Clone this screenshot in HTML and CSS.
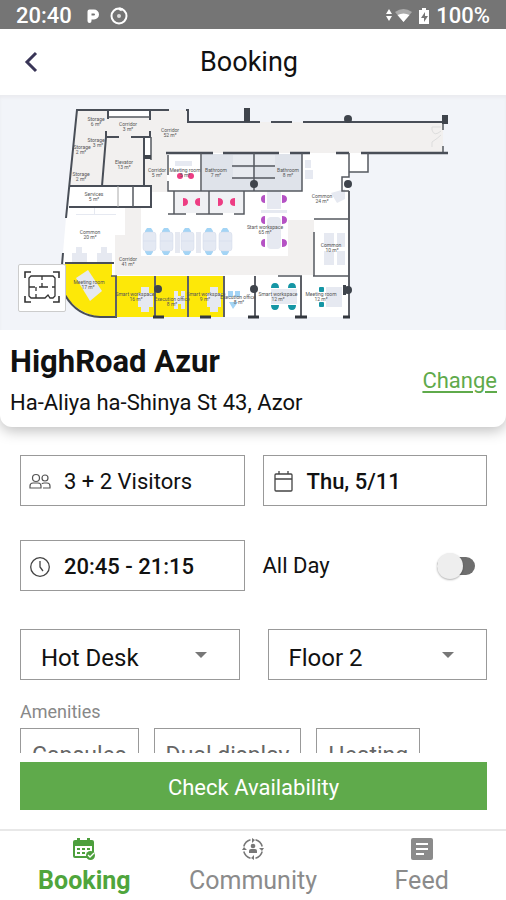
FILE: index.html
```html
<!DOCTYPE html>
<html lang="en">
<head>
  <meta charset="UTF-8">
  <meta name="viewport" content="width=device-width, initial-scale=1">
  <title>Booking</title>
  <link rel="stylesheet" href="styles.css">
</head>
<body>
  <div class="status-bar">
    <span>20:40</span>
    <svg class="status-p" width="14" height="16" viewBox="0 0 14 16"><path d="M3.500 13V3.500H8a3 3 0 0 1 0 6H4" fill="none" stroke="#fff" stroke-width="4" stroke-linejoin="round" stroke-linecap="round"/></svg>
    <svg width="18" height="18" viewBox="0 0 18 18"><circle cx="9" cy="9" r="7.500" fill="none" stroke="#fff" stroke-width="2"/><circle cx="9" cy="9" r="2" fill="#ddd"/><path d="M9 1.500l3 1.500" stroke="#fff" stroke-width="3"/></svg>
    <span class="status-right">
      <svg width="26" height="18" viewBox="0 0 26 18"><path d="M3 2l3 5H0zM3 14l3-5H0z" fill="#fff"/><path d="M9 5q8.500-6 17 0l-8.500 10z" fill="#aaa"/><path d="M11.500 8q6-3 12 0l-6 7z" fill="#fff"/></svg>
      <svg width="12" height="18" viewBox="0 0 12 18"><path d="M4 1h4v2h3v14H1V3h3z" fill="#fff"/><path d="M7 5l-4 6h3v4l4-6H7z" fill="#777"/></svg>
      <span>100%</span>
    </span>
  </div>

  <header class="header">
    <button class="back" aria-label="Back">
      <svg width="16" height="22" viewBox="0 0 16 22"><path d="M12 2L3 11l9 9" fill="none" stroke="#393557" stroke-width="3"/></svg>
    </button>
    <h1>Booking</h1>
  </header>

  <section class="map">
    <svg class="plan" viewBox="0 0 506 235" role="img" aria-label="Floor plan">
      <!-- floor -->
      <path d="M77 15H188V27H443V58H349V222H100Q76 218 65 199L62 169 66 123z" fill="#fff"/>
      <path d="M77 15H188V27H443V58H167V97H151V91H70zM115 140H125V112H141V161H288V125H314V180H115z" fill="#f2f0ef"/>
      <path d="M349 58H368V77H349zM109 16H150V22H109zM71 92H150V111H70zM145 42H151V62H145z" fill="#fff"/>
      <path d="M202 59H302V96H202z" fill="#dfe3ea"/>
      <path d="M233 60H253V70H233zM255 60H275V70H255zM233 73H253V82H233z" fill="#e8ebf0"/>
      <path d="M175 97H208V118H175zM210 97H243V118H210z" fill="#f0f1f4"/>
      <!-- bookable rooms -->
      <path d="M65 168H112V181H224V222H100Q76 218 65 199z" fill="#fde808"/>

      <g fill="#e6e9f1">
        <path d="M76 183L88 175 102 196 90 206z"/>
        <path d="M141 192h8v6h4v14h-4v5h-8v-5h-3v-14h3zM210 192h8v6h3v14h-3v5h-8v-5h-3v-14h3zM174 196h4v5h3v-5h4v18h-4v-5h-3v5h-4z"/>
        <path d="M72 158h4v-6h6v6h5v9H72zM97 158h4v-6h6v6h5v9H97z"/>
        <rect x="175" y="137" width="5" height="21"/><rect x="196" y="137" width="5" height="21"/>
        <rect x="267" y="96" width="14" height="18"/><rect x="267" y="122" width="14" height="32" rx="4"/>
        <path d="M261 115h26v3h-26zM324 138h10v14h-10zM337 138h8v14h-8zM324 156h10v14h-10zM337 156h8v14h-8zM331 98l14-4v10l-8 4z"/>
        <rect x="271" y="194" width="26" height="15"/><rect x="326" y="192" width="16" height="20"/>
        <path d="M305 65h6v8h-6zM305 75h8v9h-8zM175 66h17v5h-17zM76 119h40v1H76zM94 113h1v6h-1z"/>
      </g>
      <g fill="#a3d4f5">
        <path d="M145 139v-3l2-3h4l2 3v3zM162 139v-3l2-3h4l2 3v3zM183 139v-3l2-3h4l2 3v3zM205 139v-3l2-3h4l2 3v3zM221 139v-3l2-3h4l2 3v3z"/>
        <path d="M145 154v3l2 3h4l2-3v-3zM162 154v3l2 3h4l2-3v-3zM183 154v3l2 3h4l2-3v-3zM205 154v3l2 3h4l2-3v-3zM221 154v3l2 3h4l2-3v-3z"/>
        <path d="M228 196h5v6h-5zM235 196h5v6h-5zM229 207h9l-5 7z"/>
      </g>
      <g fill="#e4e9f3" stroke="#d1d9e8" stroke-width=".500">
        <rect x="143" y="137" width="13" height="19" rx="3"/><rect x="160" y="137" width="13" height="19" rx="3"/><rect x="181" y="137" width="13" height="19" rx="3"/><rect x="203" y="137" width="13" height="19" rx="3"/><rect x="219" y="137" width="13" height="19" rx="3"/>
        <path d="M143 146h13M160 146h13M181 146h13M203 146h13M219 146h13"/>
      </g>
      <g fill="#b552c4">
        <path d="M265 100v8q-4 0-4-4t4-4zM265 121v8q-4 0-4-4t4-4zM265 144v8q-4 0-4-4t4-4zM282 100v8q5 0 5-4t-5-4zM282 121v8q5 0 5-4t-5-4zM282 144v8q5 0 5-4t-5-4z"/>
      </g>
      <g fill="#ed3d83">
        <circle cx="180" cy="81" r="3"/><circle cx="191" cy="81" r="3"/>
        <path d="M183 103q5 0 5 4t-5 4zM200 103q-5 0-5 4t5 4zM218 103q5 0 5 4t-5 4zM235 103q-5 0-5 4t5 4z"/>
      </g>
      <g fill="#1596a5">
        <path d="M271 193q0-5 4-5t4 5zM288 193q0-5 4-5t4 5zM271 210q0 5 4 5t4-5zM288 210q0 5 4 5t4-5z"/>
        <rect x="319" y="192" width="5" height="5" rx="1"/><rect x="319" y="207" width="5" height="5" rx="1"/>
      </g>

      <!-- walls -->
      <g fill="none" stroke="#494e57" stroke-width="2">
        <path d="M66 123L77 15H169M186 15H188V27H260M271 27H292M303 27H448M63 158L62 170"/>
        <path d="M166 58H213M223 58H279M290 58H310M336 58H349M361 58H448" stroke-width="2.500"/>
        <path d="M108 15V24M150 15V25M150 36V42H131M119 42H106V36M106 42L102 91M144 42V91M70 91H151V112H69"/>
        <path d="M65 168H114M65 200Q77 221 100 222H117"/>
        <path d="M116 181V222M155 181V222M188 181V222M224 181V222M255 181V222M301 181V222M349 96V222" stroke="#5d6067"/>
      </g>
      <g fill="none" stroke="#555960" stroke-width="1.500">
        <path d="M109 22H150M133 91V112M145 62H151M151 42V65M443 27V35M443 51V57"/>
        <path d="M168 60V80M168 86V96H302V58M201 58V96M254 58V96M232 71H275M232 83H275"/>
        <path d="M174 96V119M168 119H186M209 96V119M196 119H223M244 96V119H234"/>
        <path d="M349 58V82H342V96H349M349 77H368V58M314 124H349M314 137V181M278 181H302M313 181H349M111 181H117"/>
      </g>
      <path d="M118 91V112" stroke="#aaa"/>
      <path d="M153 222H164M200 222H211M248 222H259M295 222H307M343 222H350" stroke="#33373e" stroke-width="3"/>
      <g fill="#3f444c">
        <path d="M244 13h6v14h-6zM442 20h6v9h-6zM343 190h3v10h-3zM144 60h7v4h-7z"/>
        <circle cx="348" cy="24" r="4"/><circle cx="348" cy="89" r="4"/><circle cx="254" cy="89" r="4"/>
        <circle cx="158" cy="194" r="4"/><circle cx="254" cy="194" r="4"/><circle cx="348" cy="195" r="4"/>
      </g>
      <path d="M441 32h-9v3q2 7 9 1M432 52v-5q6-4 9-7" fill="none" stroke="#ddd"/>

      <g class="rooms">
        <text x="96" y="26">Storage</text><text x="96" y="31">6 m²</text>
        <text x="96" y="47">Storage</text><text x="98" y="52">3 m²</text>
        <text x="82" y="54">Storage</text><text x="81" y="59">2 m²</text>
        <text x="81" y="81">Storage</text><text x="81" y="86">2 m²</text>
        <text x="128" y="31">Corridor</text><text x="128" y="36">3 m²</text>
        <text x="170" y="37">Corridor</text><text x="170" y="42">52 m²</text>
        <text x="124" y="69">Elevator</text><text x="124" y="74">13 m²</text>
        <text x="157" y="77">Corridor</text><text x="157" y="82">5 m²</text>
        <text x="185" y="77">Meeting room</text><text x="185" y="82">5 m²</text>
        <text x="216" y="77">Bathroom</text><text x="216" y="82">7 m²</text>
        <text x="288" y="77">Bathroom</text><text x="288" y="82">8 m²</text>
        <text x="94" y="101">Services</text><text x="94" y="106">5 m²</text>
        <text x="322" y="103">Common</text><text x="322" y="108">24 m²</text>
        <text x="90" y="139">Common</text><text x="90" y="144">20 m²</text>
        <text x="128" y="166">Corridor</text><text x="128" y="171">41 m²</text>
        <text x="265" y="134">Start workspace</text><text x="265" y="139">65 m²</text>
        <text x="331" y="152">Common</text><text x="332" y="157">10 m²</text>
        <text x="89" y="189">Meeting room</text><text x="88" y="194">17 m²</text>
        <text x="135" y="201">Smart workspace</text><text x="136" y="206">16 m²</text>
        <text x="172" y="206">Execution office</text><text x="172" y="211">8 m²</text>
        <text x="206" y="201">Smart workspace</text><text x="205" y="206">9 m²</text>
        <text x="238" y="204">Execution office</text><text x="239" y="209">8 m²</text>
        <text x="278" y="201">Smart workspace</text><text x="278" y="206">12 m²</text>
        <text x="321" y="201">Meeting room</text><text x="321" y="206">12 m²</text>
      </g>
    </svg>
    <button class="map-expand" aria-label="Expand floor plan">
      <svg width="36" height="36" viewBox="0 0 36 36" fill="none" stroke="#333">
        <path d="M1 8V2h6M29 2h6v6M35 26v6h-6M7 32H1v-6" stroke-width="1.600"/>
        <path d="M7 6h22l2 2v18l-2 2h-3l-2-3-3 3H7l-2-2V8zM5 17h6M15 17h9M28 17h3M12 17v4M12 24v4M18 6v4M18 13v4" stroke-width="1.300"/>
      </svg>
    </button>
  </section>

  <section class="place">
    <div>
      <h2>HighRoad Azur</h2>
      <p>Ha-Aliya ha-Shinya St 43, Azor</p>
    </div>
    <a href="#">Change</a>
  </section>

  <main class="form">
    <div class="row">
      <button class="field">
        <svg width="22" height="22" viewBox="0 0 22 22" fill="none" stroke="#555" stroke-width="1.200"><circle cx="7" cy="7" r="3.500"/><circle cx="16" cy="7" r="3"/><path d="M1 17v-2q0-3 3-3h5q3 0 3 3v2zM14 17h7v-2q0-3-3-3h-3q-2 0-2 1"/></svg>
        3 + 2 Visitors
      </button>
      <button class="field strong">
        <svg width="22" height="22" viewBox="0 0 22 22" fill="none" stroke="#444" stroke-width="1.300"><rect x="3" y="3" width="17" height="17" rx="1"/><path d="M3 8h17M7 0v3M16 0v3"/></svg>
        Thu, 5/11
      </button>
    </div>
    <div class="row">
      <button class="field strong">
        <svg width="22" height="22" viewBox="0 0 22 22" fill="none" stroke="#444" stroke-width="1.300"><circle cx="11" cy="11" r="9.300"/><path d="M11 5v6l3 4"/></svg>
        20:45 - 21:15
      </button>
      <label class="all-day">
        All Day
        <input type="checkbox" class="switch">
      </label>
    </div>
    <div class="row selects">
      <div class="select">
        <select aria-label="Space type">
          <option>Hot Desk</option>
        </select>
      </div>
      <div class="select">
        <select aria-label="Floor">
          <option>Floor 2</option>
        </select>
      </div>
    </div>
    <h3>Amenities</h3>
    <div class="chips">
      <button>Capsules</button>
      <button>Dual display</button>
      <button>Heating</button>
    </div>
  </main>

  <div class="action">
    <button>Check Availability</button>
  </div>

  <nav class="tabs">
    <a href="#" class="active">
      <svg width="24" height="24" viewBox="0 0 24 24"><path d="M3 3h2V1h3v2h7V1h3v2h2q2 0 2 2v11h-2V9H3v10h12v2H3q-2 0-2-2V5q0-2 2-2z" fill="#4d9f3d"/><path d="M5 11h3v2H5zM10 11h3v2h-3zM15 11h3v2h-3zM5 15h3v2H5zM10 15h3v2h-3z" fill="#4d9f3d"/><circle cx="18.500" cy="18.500" r="4.500" fill="#4d9f3d"/><path d="M16 18l2 2 4-4" fill="none" stroke="#fff" stroke-width="1.300"/></svg>
      Booking
    </a>
    <a href="#">
      <svg width="24" height="24" viewBox="0 0 24 24"><path d="M14.500 2.800a9.500 9.500 0 0 1 6.700 6.700M21.200 14.500a9.500 9.500 0 0 1-6.700 6.700M9.500 21.200a9.500 9.500 0 0 1-6.700-6.700M2.800 9.500a9.500 9.500 0 0 1 6.700-6.700" fill="none" stroke="#777" stroke-width="1.500"/><path d="M11 1l3 2-3 3zM23 11l-2 3-3-3zM13 23l-3-2 3-3zM1 13l2-3 3 3z" fill="#777"/><circle cx="12" cy="9" r="2.300" fill="#777"/><path d="M8 16v-2q0-2 2-2h4q2 0 2 2v2z" fill="#777"/></svg>
      Community
    </a>
    <a href="#">
      <svg width="24" height="24" viewBox="0 0 24 24"><rect x="1" y="1" width="22" height="22" rx="2" fill="#8b8b8b"/><path d="M6 7h12M6 12h12M6 17h8" stroke="#fff" stroke-width="2"/></svg>
      Feed
    </a>
  </nav>
</body>
</html>
```

FILE: styles.css
```css
:root {
  --green: #5faa4b;
  --border: #999;
}
* {
  box-sizing: border-box;
}
body {
  margin: 0;
  height: 100vh;
  display: flex;
  flex-direction: column;
  font-family: Roboto, sans-serif;
  font-size: 22px;
  line-height: 28px;
  color: #111;
  background: #fff;
}
h1, h2, h3, p {
  margin: 0;
}
button, select {
  font: inherit;
  color: inherit;
  background: #fff;
  border: 1px solid var(--border);
  border-radius: 0;
  cursor: pointer;
}
svg {
  display: block;
  flex-shrink: 0;
}
.status-bar {
  display: flex;
  align-items: center;
  gap: 10px;
  padding: 3px 16px 0;
  height: 29px;
  background: #757575;
  color: #fff;
  font-weight: 500;
}
.status-p {
  margin-left: 4px;
}
.status-right {
  display: flex;
  align-items: center;
  gap: 6px;
  margin-left: auto;
}
.header {
  display: grid;
  grid-template-columns: 64px 1fr 64px;
  align-items: center;
  height: 66px;
}
.back {
  justify-self: center;
  padding: 8px;
  border: none;
}
.header h1 {
  font-size: 27px;
  font-weight: 400;
  text-align: center;
  padding-right: 8px;
}
.map {
  position: relative;
  background: #f2f4f9;
  box-shadow: inset 0 3px 3px #ebecf0;
}
.plan {
  width: 100%;
}
.rooms text {
  font-size: 5px;
  fill: #555;
  text-anchor: middle;
}
.map-expand {
  position: absolute;
  left: 18px;
  bottom: 18px;
  padding: 5px;
  border-color: #ccc;
  border-radius: 2px;
}
.place {
  display: flex;
  align-items: center;
  justify-content: space-between;
  padding: 14px 9px 10px 10px;
  border-radius: 0 0 12px 12px;
  box-shadow: 0 4px 14px rgba(0, 0, 0, 0.25);
  clip-path: inset(0 0 -30px 0);
}
.place h2 {
  font-size: 31px;
  line-height: 36px;
  font-weight: 700;
}
.place p {
  padding-top: 9px;
}
.place a {
  color: var(--green);
  text-underline-offset: 3px;
}
.form {
  flex: 1;
  min-height: 0;
  overflow-y: auto;
  scrollbar-width: none;
  padding: 28px 19px 0 20px;
}
.row {
  display: grid;
  grid-template-columns: 1fr 1fr;
  gap: 18px;
  margin-bottom: 34px;
}
.field {
  display: flex;
  align-items: center;
  gap: 13px;
  height: 51px;
  padding: 2px 8px 0;
}
.strong {
  font-weight: 500;
}
.all-day {
  display: flex;
  align-items: center;
  justify-content: space-between;
  padding-right: 12px;
}
.switch {
  appearance: none;
  display: flex;
  align-items: center;
  width: 38px;
  height: 18px;
  margin: 0;
  border-radius: 9px;
  background: #6e6e6e;
}
.switch::before {
  content: "";
  width: 26px;
  height: 26px;
  flex-shrink: 0;
  border-radius: 50%;
  background: #eee;
  box-shadow: 0 1px 2px rgba(0, 0, 0, 0.3);
}
.switch:checked {
  justify-content: flex-end;
  background: var(--green);
}
.selects {
  gap: 28px;
  padding-top: 4px;
  margin-bottom: 20px;
}
.select {
  display: grid;
  align-items: center;
}
.select select, .select::after {
  grid-area: 1 / 1;
}
.select select {
  appearance: none;
  width: 100%;
  height: 51px;
  padding: 6px 20px 0;
  font-size: 24px;
}
.select::after {
  content: "";
  justify-self: end;
  margin-right: 33px;
  border: 6px solid transparent;
  border-top-color: #777;
  border-bottom: none;
  pointer-events: none;
}
.form h3 {
  font-size: 18px;
  line-height: 24px;
  font-weight: 400;
  color: #888;
}
.chips {
  display: flex;
  gap: 15px;
  padding: 4px 0 20px;
}
.chips button {
  height: 51px;
  padding: 4px 11px 0;
  font-size: 23px;
  color: #666;
}
.action {
  padding: 9px 19px 19px 20px;
}
.action button {
  width: 100%;
  height: 48px;
  padding: 3px 0 0;
  border: none;
  background: var(--green);
  color: #fff;
}
.tabs {
  display: grid;
  grid-template-columns: 1fr 1fr 1fr;
  height: 71px;
  padding-top: 6px;
  border-top: 2px solid #e8e8e8;
}
.tabs a {
  display: flex;
  flex-direction: column;
  align-items: center;
  gap: 6px;
  font-size: 25px;
  color: #8b8b8b;
  text-decoration: none;
}
.tabs .active {
  color: #4fa53c;
  font-weight: 700;
}
```
